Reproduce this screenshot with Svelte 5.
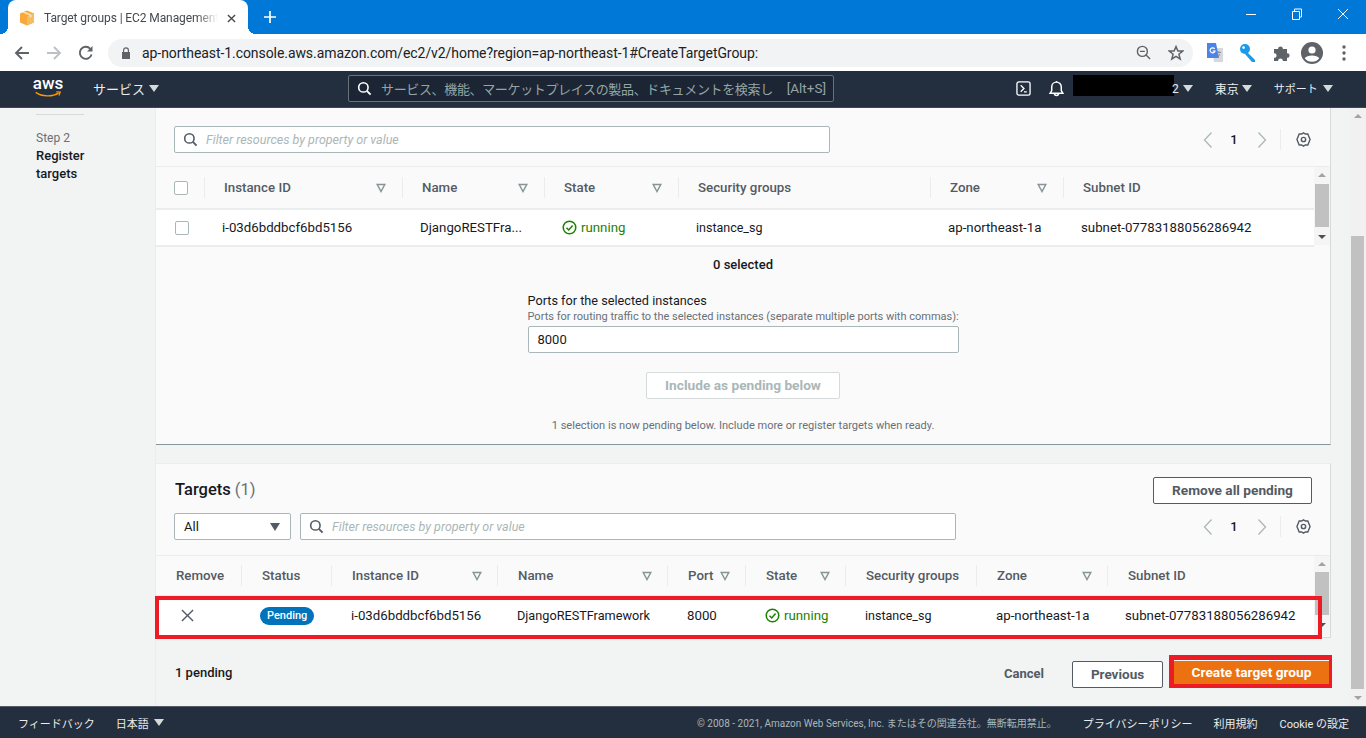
<script>
  const topCols = [
    { label: 'Instance ID', sort: true },
    { label: 'Name', sort: true },
    { label: 'State', sort: true },
    { label: 'Security groups', sort: false },
    { label: 'Zone', sort: true },
    { label: 'Subnet ID', sort: false }
  ];
  const bottomCols = [
    { label: 'Remove', sort: false },
    { label: 'Status', sort: false },
    { label: 'Instance ID', sort: true },
    { label: 'Name', sort: true },
    { label: 'Port', sort: true },
    { label: 'State', sort: true },
    { label: 'Security groups', sort: false },
    { label: 'Zone', sort: true },
    { label: 'Subnet ID', sort: false }
  ];
</script>

{#snippet caret()}<span class="caret"></span>{/snippet}
{#snippet searchIcon(c)}
  <svg class="ico16" viewBox="0 0 16 16" fill="none" stroke={c} stroke-width="1.7"><circle cx="6.8" cy="6.8" r="5"/><path d="M10.5 10.5L14.5 14.5" stroke-width="2"/></svg>
{/snippet}
{#snippet sortIcon()}
  <svg class="sort" viewBox="0 0 10 10" fill="none" stroke="#879596" stroke-width="1.5"><path d="M1.2 1.5H8.8L5 8.5Z"/></svg>
{/snippet}
{#snippet pager()}
  <div class="pager">
    <svg class="chev" viewBox="0 0 10 18" fill="none" stroke="#aab7b8" stroke-width="1.3"><path d="M8.5 1.5L1.5 9L8.5 16.5"/></svg>
    <span class="pnum">1</span>
    <svg class="chev" viewBox="0 0 10 18" fill="none" stroke="#aab7b8" stroke-width="1.3"><path d="M1.5 1.5L8.5 9L1.5 16.5"/></svg>
    <span class="psep"></span>
    <svg class="gear" viewBox="0 0 16 16" fill="none" stroke="#545b64" stroke-width="1.5"><path d="M8 1L10 2.2L12.6 2.2L13.6 4.6L15 8L13.6 11.4L12.6 13.8L10 13.8L8 15L6 13.8L3.4 13.8L2.4 11.4L1 8L2.4 4.6L3.4 2.2L6 2.2Z"/><circle cx="8" cy="8" r="2.3"/></svg>
  </div>
{/snippet}
{#snippet running()}
  <span class="running">
    <svg class="ico15" viewBox="0 0 16 16" fill="none" stroke="#1d8102" stroke-width="1.6"><circle cx="8" cy="8" r="6.7"/><path d="M4.8 8.2L7.2 10.6L11.3 5.8"/></svg>
    running
  </span>
{/snippet}
{#snippet innerBar()}
  <div class="ibar">
    <span class="tri-up"></span>
    <span class="ithumb"></span>
    <span class="tri-down"></span>
  </div>
{/snippet}

<div class="screen">
  <div class="tabbar">
    <div class="tab">
      <svg class="fav" viewBox="0 0 16 16"><path d="M8 0.5L15 3.5V12.5L8 15.5L1 12.5V3.5Z" fill="#f7a93b"/><path d="M8 6.5V15.5L15 12.5V3.5Z" fill="#f5bd63"/><path d="M5.5 1.6L12.5 4.6V7L10.5 7.8V5.5L3.4 2.6Z" fill="#fbe0ae"/></svg>
      <span class="tabtitle">Target groups | EC2 Management</span>
      <svg class="tabx" viewBox="0 0 10 10" stroke="#45494d" stroke-width="1.5"><path d="M1 1L9 9M9 1L1 9"/></svg>
    </div>
    <svg class="plus" viewBox="0 0 12 12" stroke="#fff" stroke-width="1.7"><path d="M6 0V12M0 6H12"/></svg>
    <div class="winctl">
      <svg viewBox="0 0 12 12" stroke="#fff" fill="none"><path d="M1 6.5H11"/></svg>
      <svg viewBox="0 0 12 12" stroke="#fff" fill="none"><path d="M1.5 3.5H8.5V11.5H1.5ZM3.5 3.5V1H10.5V9H8.5"/></svg>
      <svg viewBox="0 0 12 12" stroke="#fff" fill="none"><path d="M1 1L11 11M11 1L1 11"/></svg>
    </div>
  </div>

  <div class="toolbar">
    <svg class="nav" viewBox="0 0 16 16" fill="none" stroke="#5f6368" stroke-width="1.9"><path d="M15 8H2M8 2L2 8L8 14"/></svg>
    <svg class="nav" viewBox="0 0 16 16" fill="none" stroke="#bdc1c6" stroke-width="1.9"><path d="M1 8H14M8 2L14 8L8 14"/></svg>
    <svg class="nav" viewBox="0 0 16 16" fill="none" stroke="#5f6368" stroke-width="1.9"><path d="M13.6 9.5A6 6 0 1 1 12.3 3.8"/><path d="M14.5 1V6.5H9Z" fill="#5f6368" stroke="none"/></svg>
    <div class="omni">
      <svg class="lock" viewBox="0 0 10 12"><path d="M1 5H9V12H1Z" fill="#5f6368"/><path d="M2.6 5V3.2A2.4 2.4 0 0 1 7.4 3.2V5" fill="none" stroke="#5f6368" stroke-width="1.2"/></svg>
      <span class="url">ap-northeast-1.console.aws.amazon.com/ec2/v2/home?region=ap-northeast-1#CreateTargetGroup:</span>
      <svg class="omi1" viewBox="0 0 16 16" fill="none" stroke="#5f6368" stroke-width="1.5"><circle cx="6.8" cy="6.8" r="5.3"/><path d="M4.2 6.8H9.4M10.7 10.7L15 15"/></svg>
      <svg class="omi2" viewBox="0 0 16 16" fill="none" stroke="#5f6368" stroke-width="1.5"><path d="M8 1.6L9.9 6H14.7L10.9 9.2L12.2 14L8 11.4L3.8 14L5.1 9.2L1.3 6H6.1Z"/></svg>
    </div>
    <div class="exts">
      <svg viewBox="0 0 18 20"><path d="M6 5H17V19H8Z" fill="#d5d8dc"/><path d="M1 0H10L13 15H1Z" fill="#4a84e8"/><path d="M8.6 5.8A2.5 2.5 0 1 0 9 8H6.6" fill="none" stroke="#fff" stroke-width="1.2"/><path d="M11 9.5L15 9.5M13 8V9.5M11.5 15L14 11" stroke="#8a8f94" fill="none"/></svg>
      <svg viewBox="0 0 18 20"><circle cx="6" cy="6" r="5" fill="#1a9bea"/><circle cx="4.6" cy="4.6" r="1.3" fill="#fff"/><path d="M8 9L16 17V19H13L6 11Z" fill="#1a9bea"/></svg>
      <svg viewBox="0 0 18 20"><path d="M2 6H6.2C5.6 2.6 11.4 2.6 10.8 6H15V10.2C18.4 9.6 18.4 15.4 15 14.8V18H10.8C11.4 14.6 5.6 14.6 6.2 18H2V14.8C5.4 15.4 5.4 9.6 2 10.2Z" fill="#5f6368"/></svg>
      <svg class="avatar" viewBox="0 0 22 22"><circle cx="11" cy="11" r="11" fill="#5f6368"/><circle cx="11" cy="8" r="3.6" fill="#fff"/><path d="M3.8 16.2C6 12.6 16 12.6 18.2 16.2C16.6 18.6 14 19.8 11 19.8C8 19.8 5.4 18.6 3.8 16.2Z" fill="#fff"/></svg>
      <svg class="dots" viewBox="0 0 4 16" fill="#5f6368"><circle cx="2" cy="2" r="1.7"/><circle cx="2" cy="8" r="1.7"/><circle cx="2" cy="14" r="1.7"/></svg>
    </div>
  </div>

  <header class="awsnav">
    <div class="logo">
      <span class="awstxt">aws</span>
      <svg viewBox="0 0 30 8" fill="none"><path d="M1 1.5C8 6.5 20 7 27 2.5" stroke="#f90" stroke-width="1.6"/><path d="M24.5 1L29 1.2L27.5 5.2" stroke="#f90" stroke-width="1.4"/></svg>
    </div>
    <span class="svc">サービス</span>{@render caret()}
    <div class="globalsearch">
      {@render searchIcon('#fff')}
      <span class="gsph">サービス、機能、マーケットプレイスの製品、ドキュメントを検索し</span>
      <span class="gskey">[Alt+S]</span>
    </div>
    <svg class="term" viewBox="0 0 16 16" fill="none" stroke="#fff" stroke-width="1.4"><rect x="1" y="1" width="14" height="14" rx="2"/><path d="M5 4.5L8.5 8L5 11.5M8.5 11.5H11.5"/></svg>
    <svg class="bell" viewBox="0 0 16 16" fill="none" stroke="#fff" stroke-width="1.4"><path d="M2 12.5H14L12.5 10V6.5A4.5 4.5 0 0 0 3.5 6.5V10ZM6 12.5A2 2 0 0 0 10 12.5"/><path d="M8 1V2"/></svg>
    <div class="redact"><span class="blackout"></span><span class="acct">2</span>{@render caret()}</div>
    <span class="region">東京</span>{@render caret()}
    <span class="support">サポート</span>{@render caret()}
  </header>

  <main class="main">
    <aside class="side">
      <div class="sline"></div>
      <div class="step">Step 2</div>
      <div class="stitle">Register<br>targets</div>
    </aside>

    <div class="content">
      <section class="panel first">
        <div class="bar1">
          <div class="filter wide">
            {@render searchIcon('#545b64')}
            <span>Filter resources by property or value</span>
          </div>
          {@render pager()}
        </div>
        <div class="tablewrap">
          <div class="table">
            <div class="head cols-top">
              <div class="hc check"><span class="box"></span></div>
              {#each topCols as c}
                <div class="hc"><span>{c.label}</span>{#if c.sort}{@render sortIcon()}{/if}</div>
              {/each}
            </div>
            <div class="row cols-top">
              <div class="dc check"><span class="box soft"></span></div>
              <div class="dc">i-03d6bddbcf6bd5156</div>
              <div class="dc">DjangoRESTFra...</div>
              <div class="dc">{@render running()}</div>
              <div class="dc nar">instance_sg</div>
              <div class="dc">ap-northeast-1a</div>
              <div class="dc">subnet-07783188056286942</div>
            </div>
          </div>
          {@render innerBar()}
        </div>
        <div class="selected">0 selected</div>
        <div class="ports">
          <div class="plabel">Ports for the selected instances</div>
          <div class="phelp">Ports for routing traffic to the selected instances (separate multiple ports with commas):</div>
          <div class="pinput">8000</div>
        </div>
        <div class="includewrap"><span class="btn disabled">Include as pending below</span></div>
        <div class="note">1 selection is now pending below. Include more or register targets when ready.</div>
      </section>

      <section class="panel second">
        <div class="bar2a">
          <h2>Targets <span>(1)</span></h2>
          <span class="btn removeall">Remove all pending</span>
        </div>
        <div class="bar2b">
          <div class="sel">All<span class="seltri"></span></div>
          <div class="filter wide2">
            {@render searchIcon('#545b64')}
            <span>Filter resources by property or value</span>
          </div>
          {@render pager()}
        </div>
        <div class="tablewrap t2">
          <div class="table">
            <div class="head cols-bot">
              {#each bottomCols as c}
                <div class="hc"><span>{c.label}</span>{#if c.sort}{@render sortIcon()}{/if}</div>
              {/each}
            </div>
            <div class="row cols-bot marked">
              <div class="dc xc"><svg class="xi" viewBox="0 0 14 14" fill="none" stroke="#545b64" stroke-width="1.5"><path d="M1 1L13 13M13 1L1 13"/></svg></div>
              <div class="dc pc"><span class="pill">Pending</span></div>
              <div class="dc">i-03d6bddbcf6bd5156</div>
              <div class="dc nar2">DjangoRESTFramework</div>
              <div class="dc">8000</div>
              <div class="dc">{@render running()}</div>
              <div class="dc nar">instance_sg</div>
              <div class="dc">ap-northeast-1a</div>
              <div class="dc">subnet-07783188056286942</div>
            </div>
          </div>
          {@render innerBar()}
        </div>
      </section>

      <div class="actions">
        <span class="pendcount">1 pending</span>
        <span class="cancel">Cancel</span>
        <span class="btn prev">Previous</span>
        <span class="create"><span class="createin">Create target group</span></span>
      </div>
    </div>

    <div class="pagebar">
      <span class="tri-up g"></span>
      <span class="pthumb"></span>
      <span class="tri-down g"></span>
    </div>
  </main>

  <footer class="foot">
    <span class="fb">フィードバック</span>
    <span class="lang">日本語</span>{@render caret()}
    <span class="copy">© 2008 - 2021, Amazon Web Services, Inc. またはその関連会社。無断転用禁止。</span>
    <span class="fl l1">プライバシーポリシー</span>
    <span class="fl l2">利用規約</span>
    <span class="fl l3">Cookie の設定</span>
  </footer>
</div>

<style>
  :global(body) { margin: 0; background: #f2f3f3; }
  .screen { width: 1366px; height: 738px; overflow: hidden; display: flex; flex-direction: column; font-family: Roboto, "Noto Sans CJK JP", sans-serif; font-size: 14px; color: #16191f; }

  .tabbar { height: 34px; background: #0078d7; display: flex; align-items: flex-start; flex: none; }
  .tab { position: relative; margin-left: 8px; width: 240px; height: 34px; background: #fff; border-radius: 8px 8px 0 0; display: flex; align-items: center; box-sizing: border-box; padding: 2px 0 0 11px; }
  .tab::before, .tab::after { content: ""; position: absolute; bottom: 0; width: 8px; height: 8px; }
  .tab::before { left: -8px; background: radial-gradient(circle at 0 0, transparent 8px, #fff 8px); }
  .tab::after { right: -8px; background: radial-gradient(circle at 100% 0, transparent 8px, #fff 8px); }
  .fav { width: 16px; height: 16px; flex: none; }
  .tabtitle { margin-left: 9px; width: 174px; white-space: nowrap; font: 12px Roboto, sans-serif; letter-spacing: -0.1px; color: #45494d; -webkit-mask-image: linear-gradient(90deg, #000 88%, transparent); mask-image: linear-gradient(90deg, #000 88%, transparent); }
  .tabx { width: 9px; height: 9px; margin-left: 9px; }
  .plus { width: 12px; height: 12px; margin: 11px 0 0 16px; }
  .winctl { margin-left: auto; display: flex; gap: 34px; padding: 8px 17px 0 0; }
  .winctl svg { width: 12px; height: 12px; }

  .toolbar { height: 37px; background: #fff; display: flex; align-items: center; flex: none; }
  .nav { width: 16px; height: 16px; margin-left: 16px; }
  .nav:first-child { margin-left: 14px; }
  .omni { width: 1085px; height: 28px; margin-left: 14px; background: #f1f3f4; border-radius: 14px; display: flex; align-items: center; }
  .lock { width: 10px; height: 12px; margin-left: 13px; }
  .url { margin-left: 11px; font: 14px Roboto, sans-serif; color: #202124; letter-spacing: -0.07px; white-space: nowrap; }
  .omi1 { width: 15px; height: 15px; margin-left: auto; }
  .omi2 { width: 16px; height: 16px; margin: 0 9px 0 17px; }
  .exts { display: flex; align-items: center; margin-left: 13px; }
  .exts svg { width: 18px; height: 20px; margin-right: 15px; }
  .exts svg.avatar { width: 22px; height: 22px; margin: 0 0 0 -4px; }
  .exts svg.dots { width: 4px; height: 16px; margin: 0 0 0 19px; }

  .awsnav { height: 37px; box-sizing: border-box; background: #232f3e; border-bottom: 1px solid #3c4654; padding-bottom: 2px; display: flex; align-items: center; flex: none; color: #fff; }
  .logo { margin-left: 33px; width: 30px; display: flex; flex-direction: column; align-items: center; position: relative; top: -1px; }
  .awstxt { font: 500 17px/14px Roboto, sans-serif; }
  .logo svg { width: 30px; height: 7px; margin-top: 1px; }
  .svc { margin-left: 30px; font-size: 13px; color: #eaeded; }
  .caret { display: inline-block; width: 0; height: 0; border-left: 5px solid transparent; border-right: 5px solid transparent; border-top: 7px solid #d5dbdb; flex: none; }
  .awsnav > .svc + .caret { margin-left: 4px; }
  .globalsearch { margin-left: 189px; width: 486px; height: 27px; box-sizing: border-box; background: #1b2533; border: 1px solid #687078; border-radius: 2px; display: flex; align-items: center; padding-left: 8px; }
  .ico16 { width: 15px; height: 15px; flex: none; }
  .gsph { margin-left: 9px; font-size: 13px; color: #95a5a6; letter-spacing: -0.35px; white-space: nowrap; }
  .gskey { margin-left: auto; margin-right: 7px; font-size: 13.5px; color: #95a5a6; }
  .term { width: 15px; height: 15px; margin-left: 182px; }
  .bell { width: 17px; height: 17px; margin-left: 17px; }
  .redact { display: flex; align-items: center; margin-left: 8px; align-self: flex-start; height: 35px; }
  .blackout { width: 101px; height: 21px; background: #000; margin-top: -7px; }
  .acct { font-size: 12px; margin-left: -2px; color: #eaeded; }
  .redact .caret { margin-left: 4px; }
  .region { margin-left: 22px; font-size: 12px; color: #eaeded; }
  .region + .caret { margin-left: 3px; }
  .support { margin-left: 22px; font-size: 11px; color: #eaeded; }
  .support + .caret { margin-left: 5px; }

  .main { height: 598px; display: flex; flex: none; overflow: hidden; background: #f2f3f3; }
  .side { width: 156px; box-sizing: border-box; border-right: 1px solid #eaeded; padding: 6px 0 0 36px; flex: none; }
  .sline { width: 48px; height: 1px; background: #d5dbdb; }
  .step { margin-top: 15px; font-size: 12px; line-height: 16px; color: #687078; }
  .stitle { margin-top: 1px; font-size: 13px; line-height: 18px; font-weight: 500; color: #16191f; }
  .content { width: 1175px; flex: none; }

  .panel { background: #fafafa; box-sizing: border-box; border-right: 1px solid #d5dbdb; }
  .first { border-bottom: 1px solid #879596; height: 337px; }
  .second { margin-top: 18px; border-top: 1px solid #eaeded; height: 174px; box-shadow: 0 1px 0 #d5dbdb; }

  .bar1 { height: 58px; box-sizing: border-box; padding: 18px 0 0 18px; display: flex; }
  .filter { height: 27px; box-sizing: border-box; background: #fff; border: 1px solid #aab7b8; border-radius: 2px; display: flex; align-items: center; padding-left: 8px; font-size: 12.5px; font-style: italic; color: #aab7b8; }
  .filter span { margin: 0 0 1px 8px; }
  .wide { width: 656px; }
  .wide2 { width: 656px; margin-left: 9px; }
  .pager { display: flex; align-items: center; height: 27px; margin-left: auto; width: 127px; box-sizing: border-box; flex: none; }
  .chev { width: 10px; height: 18px; flex: none; }
  .pnum { width: 8px; margin: 0 19px 0 17px; text-align: center; font-size: 13px; font-weight: 500; }
  .psep { width: 1px; height: 21px; background: #eaeded; margin-left: 13px; }
  .gear { width: 15px; height: 15px; margin-left: 15px; }

  .tablewrap { display: flex; border-top: 1px solid #eaeded; }
  .table { width: 1158px; flex: none; }
  .head { box-sizing: border-box; border-bottom: 2px solid #eaeded; display: grid; align-items: center; height: 43px; }
  .row { height: 35px; background: #fff; display: grid; align-items: stretch; border-bottom: 2px solid #eaeded; box-sizing: content-box; }
  .cols-top { grid-template-columns: 49px 198px 142px 134px 252px 133px 250px; }
  .cols-bot { grid-template-columns: 86px 90px 166px 170px 78px 100px 131px 131px 206px; }
  .hc { height: 21px; box-sizing: border-box; border-right: 1px solid #eaeded; padding: 0 16px 0 19px; display: flex; align-items: center; justify-content: space-between; font-size: 13.3px; font-weight: 500; color: #545b64; white-space: nowrap; }
  .hc:last-child { border-right: 0; }
  .cols-bot .hc { padding: 0 15px 0 20px; }
  .hc.check { padding: 0 0 0 18px; justify-content: flex-start; }
  .sort { width: 10px; height: 10px; flex: none; }
  .dc { padding-left: 17px; font-size: 13.25px; white-space: nowrap; color: #16191f; display: flex; align-items: center; }
  .dc.nar { font-size: 12.5px; }
  .dc.nar2 { font-size: 12.7px; }
  .cols-bot .dc { padding-left: 19px; padding-bottom: 3px; }
  .cols-bot .dc:last-child { padding-left: 17px; }
  .dc.check { padding-left: 19px; }
  .box { display: block; width: 12px; height: 12px; background: #fff; border: 1px solid #aab7b8; border-radius: 2px; }
  .running { display: inline-flex; align-items: center; gap: 4px; color: #1d8102; }
  .ico15 { width: 15px; height: 15px; }

  .ibar { width: 16px; height: 78px; background: #f5f5f5; display: flex; flex-direction: column; align-items: center; padding: 6px 0; box-sizing: border-box; flex: none; margin-right: 1px; }
  .ithumb { width: 14px; height: 43px; background: #c1c1c1; margin-top: 7px; }
  .t2 .ithumb { margin-top: 6px; }
  .tri-up { width: 0; height: 0; border-left: 4px solid transparent; border-right: 4px solid transparent; border-bottom: 4px solid #a3a3a3; flex: none; }
  .tri-down { width: 0; height: 0; border-left: 4px solid transparent; border-right: 4px solid transparent; border-top: 4px solid #505050; flex: none; margin-top: auto; }
  .g { border-top-color: #a3a3a3; }

  .selected { margin-top: 8px; text-align: center; font-weight: 500; font-size: 13px; line-height: 20px; }
  .ports { width: 431px; margin: 18px auto 0; }
  .plabel { font-size: 12.7px; line-height: 16px; color: #16191f; }
  .phelp { font-size: 11px; line-height: 16px; color: #687078; white-space: nowrap; }
  .pinput { margin-top: 1px; height: 27px; box-sizing: border-box; background: #fff; border: 1px solid #aab7b8; border-radius: 2px; padding-left: 9px; line-height: 25px; font-size: 13px; }
  .includewrap { text-align: center; margin-top: 19px; height: 27px; }
  .btn { display: inline-block; box-sizing: border-box; height: 27px; line-height: 25px; text-align: center; border-radius: 2px; font-size: 13.7px; font-weight: 700; background: #fff; border: 1px solid #545b64; color: #545b64; }
  .disabled { width: 194px; border-color: #d5dbdb; color: #aab7b8; }
  .note { margin-top: 19px; text-align: center; font-size: 11.05px; line-height: 16px; color: #687078; }

  .bar2a { height: 40px; box-sizing: border-box; padding: 13px 18px 0 19px; display: flex; justify-content: space-between; }
  h2 { margin: -1px 0 0; font-size: 16.5px; font-weight: 500; line-height: 27px; color: #16191f; }
  h2 span { font-weight: 400; color: #687078; }
  .removeall { width: 159px; }
  .bar2b { height: 51px; box-sizing: border-box; padding: 9px 0 0 18px; display: flex; }
  .sel { width: 117px; height: 27px; box-sizing: border-box; background: #fff; border: 1px solid #aab7b8; border-radius: 2px; display: flex; align-items: center; justify-content: space-between; padding: 0 10px 0 9px; font-size: 13px; color: #16191f; flex: none; }
  .seltri { width: 0; height: 0; border-left: 5px solid transparent; border-right: 5px solid transparent; border-top: 8px solid #545b64; }
  .t2 .head { height: 41px; }
  .t2 .row { height: 40px; border-bottom: 0; }
  .t2 .ibar { height: 80px; padding-bottom: 9px; }
  .marked { position: relative; }
  .marked::after { content: ""; position: absolute; left: -1px; right: -8px; top: -1px; bottom: -2px; border: 4px solid #ed1c24; pointer-events: none; }
  .cols-bot .xc { padding-left: 25px; }
  .xi { width: 13px; height: 13px; }
  .cols-bot .pc { padding-left: 18px; }
  .pill { background: #0073bb; color: #fff; font-size: 11px; font-weight: 500; line-height: 18px; padding: 0 7px; border-radius: 9px; }

  .actions { display: flex; align-items: flex-start; height: 69px; box-sizing: border-box; padding: 18px 0 0 19px; }
  .pendcount { margin-top: 10px; font-size: 13px; font-weight: 500; line-height: 16px; }
  .cancel { margin: 9px 0 0 auto; font-size: 13px; font-weight: 700; color: #545b64; line-height: 19px; }
  .prev { width: 91px; margin: 6px 0 0 28px; font-size: 13.5px; }
  .create { display: block; margin-left: 6px; margin-right: -1px; width: 163px; height: 33px; box-sizing: border-box; background: #ed1c24; padding: 5px 3px 4px 5px; }
  .createin { display: block; height: 24px; box-sizing: border-box; background: #ec7211; border-top: 1px solid #fff; color: #fff; font-size: 13.7px; font-weight: 700; line-height: 23px; text-align: center; }

  .pagebar { width: 17px; margin-left: 18px; background: #f1f1f1; display: flex; flex-direction: column; align-items: center; padding: 6px 0; box-sizing: border-box; flex: none; }
  .pthumb { width: 13px; height: 453px; background: #c1c1c1; margin-top: 118px; }

  .foot { height: 32px; box-sizing: border-box; background: #232f3e; border-top: 1px solid #545b64; display: flex; align-items: center; flex: none; color: #eaeded; font-size: 11px; }
  .fb { margin-left: 18px; }
  .lang { margin-left: 21px; }
  .foot > .caret { margin-left: 5px; }
  .copy { margin-left: auto; font-size: 10px; color: #aab7b8; white-space: nowrap; }
  .l1 { margin-left: 26px; }
  .l2 { margin-left: 21px; }
  .l3 { margin: 0 17px 0 22px; }
</style>
